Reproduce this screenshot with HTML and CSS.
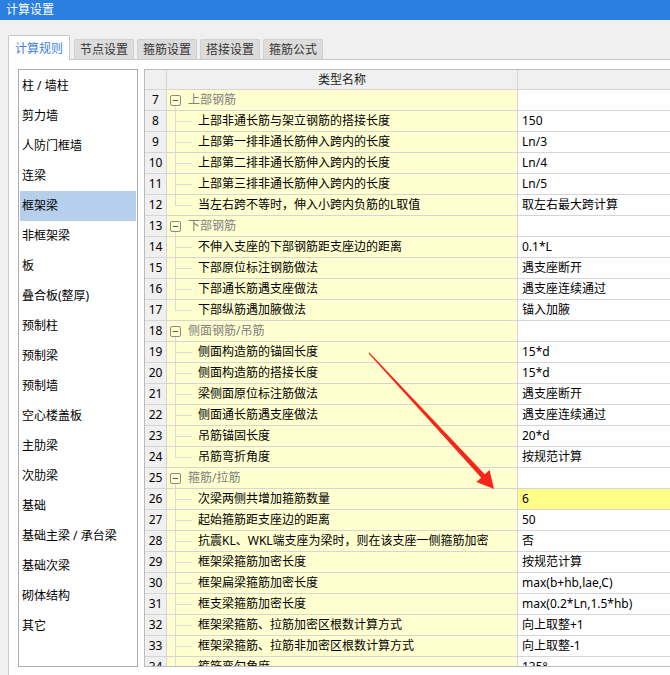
FILE: index.html
```html
<!DOCTYPE html>
<html lang="zh-CN">
<head>
<meta charset="utf-8">
<title>计算设置</title>
<link rel="stylesheet" href="styles.css">
</head>
<body>
<div class="title">计算设置</div>
<div class="tabs">
  <div class="tab active">计算规则</div>
  <div class="tab">节点设置</div>
  <div class="tab">箍筋设置</div>
  <div class="tab">搭接设置</div>
  <div class="tab">箍筋公式</div>
</div>
<div class="panel">
  <div class="list">
    <div class="item">柱 / 墙柱</div>
    <div class="item">剪力墙</div>
    <div class="item">人防门框墙</div>
    <div class="item">连梁</div>
    <div class="item sel">框架梁</div>
    <div class="item">非框架梁</div>
    <div class="item">板</div>
    <div class="item">叠合板(整厚)</div>
    <div class="item">预制柱</div>
    <div class="item">预制梁</div>
    <div class="item">预制墙</div>
    <div class="item">空心楼盖板</div>
    <div class="item">主肋梁</div>
    <div class="item">次肋梁</div>
    <div class="item">基础</div>
    <div class="item">基础主梁 / 承台梁</div>
    <div class="item">基础次梁</div>
    <div class="item">砌体结构</div>
    <div class="item">其它</div>
  </div>
  <div class="grid">
    <div class="row head"><div class="rn"></div><div class="nm">类型名称</div><div class="val"></div></div>
    <div class="row group"><div class="rn">7</div><div class="nm"><span class="box"></span>上部钢筋</div><div class="val"></div></div>
    <div class="row child"><div class="rn">8</div><div class="nm">上部非通长筋与架立钢筋的搭接长度</div><div class="val">150</div></div>
    <div class="row child"><div class="rn">9</div><div class="nm">上部第一排非通长筋伸入跨内的长度</div><div class="val">Ln/3</div></div>
    <div class="row child"><div class="rn">10</div><div class="nm">上部第二排非通长筋伸入跨内的长度</div><div class="val">Ln/4</div></div>
    <div class="row child"><div class="rn">11</div><div class="nm">上部第三排非通长筋伸入跨内的长度</div><div class="val">Ln/5</div></div>
    <div class="row child last"><div class="rn">12</div><div class="nm">当左右跨不等时，伸入小跨内负筋的L取值</div><div class="val">取左右最大跨计算</div></div>
    <div class="row group"><div class="rn">13</div><div class="nm"><span class="box"></span>下部钢筋</div><div class="val"></div></div>
    <div class="row child"><div class="rn">14</div><div class="nm">不伸入支座的下部钢筋距支座边的距离</div><div class="val">0.1*L</div></div>
    <div class="row child"><div class="rn">15</div><div class="nm">下部原位标注钢筋做法</div><div class="val">遇支座断开</div></div>
    <div class="row child"><div class="rn">16</div><div class="nm">下部通长筋遇支座做法</div><div class="val">遇支座连续通过</div></div>
    <div class="row child last"><div class="rn">17</div><div class="nm">下部纵筋遇加腋做法</div><div class="val">锚入加腋</div></div>
    <div class="row group"><div class="rn">18</div><div class="nm"><span class="box"></span>侧面钢筋/吊筋</div><div class="val"></div></div>
    <div class="row child"><div class="rn">19</div><div class="nm">侧面构造筋的锚固长度</div><div class="val">15*d</div></div>
    <div class="row child"><div class="rn">20</div><div class="nm">侧面构造筋的搭接长度</div><div class="val">15*d</div></div>
    <div class="row child"><div class="rn">21</div><div class="nm">梁侧面原位标注筋做法</div><div class="val">遇支座断开</div></div>
    <div class="row child"><div class="rn">22</div><div class="nm">侧面通长筋遇支座做法</div><div class="val">遇支座连续通过</div></div>
    <div class="row child"><div class="rn">23</div><div class="nm">吊筋锚固长度</div><div class="val">20*d</div></div>
    <div class="row child last"><div class="rn">24</div><div class="nm">吊筋弯折角度</div><div class="val">按规范计算</div></div>
    <div class="row group"><div class="rn">25</div><div class="nm"><span class="box"></span>箍筋/拉筋</div><div class="val"></div></div>
    <div class="row child"><div class="rn">26</div><div class="nm">次梁两侧共增加箍筋数量</div><div class="val hl">6</div></div>
    <div class="row child"><div class="rn">27</div><div class="nm">起始箍筋距支座边的距离</div><div class="val">50</div></div>
    <div class="row child"><div class="rn">28</div><div class="nm">抗震KL、WKL端支座为梁时，则在该支座一侧箍筋加密</div><div class="val">否</div></div>
    <div class="row child"><div class="rn">29</div><div class="nm">框架梁箍筋加密长度</div><div class="val">按规范计算</div></div>
    <div class="row child"><div class="rn">30</div><div class="nm">框架扁梁箍筋加密长度</div><div class="val">max(b+hb,lae,C)</div></div>
    <div class="row child"><div class="rn">31</div><div class="nm">框支梁箍筋加密长度</div><div class="val">max(0.2*Ln,1.5*hb)</div></div>
    <div class="row child"><div class="rn">32</div><div class="nm">框架梁箍筋、拉筋加密区根数计算方式</div><div class="val">向上取整+1</div></div>
    <div class="row child"><div class="rn">33</div><div class="nm">框架梁箍筋、拉筋非加密区根数计算方式</div><div class="val">向上取整-1</div></div>
    <div class="row child"><div class="rn">34</div><div class="nm">箍筋弯勾角度</div><div class="val">135°</div></div>
  </div>
</div>
<svg class="arrow" width="670" height="675" viewBox="0 0 670 675">
  <polygon points="369.4,352.6 368.6,353.4 481.2,477.7 476.4,482.1 494,489 489.6,469.9 484.8,474.3" fill="#f8261a"/>
</svg>
</body>
</html>
```

FILE: styles.css
```css
* { box-sizing: border-box; }
html, body {
  margin: 0;
  padding: 0;
}
body {
  width: 670px;
  height: 675px;
  overflow: hidden;
  background: #f0f0f0;
  font-family: "Noto Sans", "Noto Sans CJK SC", sans-serif;
  font-size: 12px;
  color: #000;
  position: relative;
}
.title {
  height: 20px;
  line-height: 20px;
  padding-left: 6px;
  background: #2b7fe0;
  color: #fff;
  font-size: 12px;
}
.tabs {
  display: flex;
  align-items: flex-end;
  height: 39px;
  padding-left: 8px;
  gap: 3px;
  position: relative;
  z-index: 2;
}
.tab {
  height: 20px;
  line-height: 19px;
  width: 60px;
  text-align: center;
  background: #dcdcdc;
  border: 1px solid #d0d0d0;
  border-bottom: none;
  border-radius: 2px 2px 0 0;
  color: #333;
}
.tab.active {
  width: 62px;
  height: 25px;
  line-height: 26px;
  margin-bottom: -1px;
  background: #fff;
  border-color: #c8c8c8;
  color: #3d82e0;
  margin-right: 1px;
}
.panel {
  margin-left: 8px;
  width: 662px;
  height: 616px;
  background: #fff;
  border-top: 1px solid #c8c8c8;
  border-left: 1px solid #c8c8c8;
  padding: 9px 0 0 9px;
  display: flex;
  align-items: flex-start;
  gap: 6px;
  position: relative;
  z-index: 1;
  overflow: hidden;
}
.list {
  flex: none;
  width: 120px;
  height: 598px;
  border: 1px solid #adadad;
  padding: 1px;
}
.item {
  height: 30px;
  line-height: 30px;
  padding-left: 2px;
  white-space: nowrap;
}
.item.sel {
  background: #b6cfec;
}
.grid {
  flex: 1;
  min-width: 0;
  height: 598px;
  border: 1px solid #bcbcbc;
  border-right: none;
  overflow: hidden;
}
.row {
  display: flex;
  height: 21px;
  border-bottom: 1px solid #d5d5d5;
}
.row.head {
  height: 20px;
}
.rn {
  flex: none;
  width: 22px;
  border-right: 1px solid #d5d5d5;
  background: #f0f0f0;
  text-align: center;
  line-height: 20px;
}
.nm {
  flex: none;
  width: 351px;
  border-right: 1px solid #d5d5d5;
  background: #ffffd0;
  line-height: 20px;
  white-space: nowrap;
  overflow: hidden;
  position: relative;
}
.val {
  flex: 1;
  min-width: 0;
  line-height: 20px;
  padding-left: 4px;
  white-space: nowrap;
  overflow: hidden;
}
.val.hl {
  background: #ffff88;
}
.head .rn, .head .nm, .head .val {
  background: #f0f0f0;
  line-height: 19px;
}
.head .nm {
  text-align: center;
  color: #222;
}
.group .nm {
  padding-left: 21px;
  color: #808080;
}
.group .nm::after {
  content: "";
  position: absolute;
  left: 8px;
  top: 16px;
  bottom: 0;
  border-left: 1px solid #dadada;
}
.box {
  position: absolute;
  left: 3px;
  top: 5px;
  width: 11px;
  height: 11px;
  border: 1px solid #8a8a8a;
  border-radius: 2px;
}
.box::before {
  content: "";
  position: absolute;
  left: 2px;
  top: 4px;
  width: 5px;
  height: 1px;
  background: #555;
}
.child .nm {
  padding-left: 31px;
}
.child .nm::before {
  content: "";
  position: absolute;
  left: 8px;
  top: 0;
  bottom: -1px;
  border-left: 1px solid #dadada;
}
.child.last .nm::before {
  bottom: auto;
  height: 11px;
}
.child .nm::after {
  content: "";
  position: absolute;
  left: 8px;
  top: 10px;
  width: 17px;
  border-top: 1px solid #dadada;
}
.arrow {
  position: absolute;
  left: 0;
  top: 0;
  z-index: 5;
  pointer-events: none;
}
```
